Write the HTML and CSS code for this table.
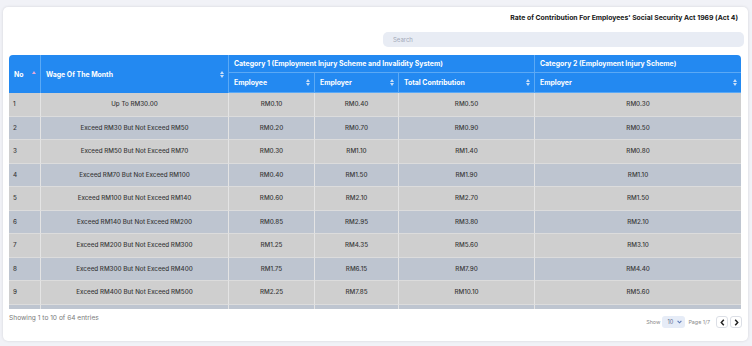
FILE: index.html
```html
<!DOCTYPE html>
<html lang="en">
<head>
    <meta charset="UTF-8">
    <meta name="viewport" content="width=device-width, initial-scale=1.0">
    <title>Rate of Contribution</title>
    <link rel="stylesheet" href="styles.css">
</head>
<body>

    <div class="card">
        <h1 class="title">Rate of Contribution For Employees' Social Security Act 1969 (Act 4)</h1>

        <div class="search-row">
            <input type="text" class="search" placeholder="Search">
        </div>

        <div class="table-wrap">
            <table class="rates">
                <colgroup>
                    <col style="width: 32px">
                    <col style="width: 188px">
                    <col style="width: 86px">
                    <col style="width: 84px">
                    <col style="width: 136px">
                    <col style="width: 206px">
                </colgroup>
                <thead>
                    <tr class="head-top">
                        <th rowspan="2" class="corner-left"><div class="th-inner">No <span class="sort asc"></span></div></th>
                        <th rowspan="2"><div class="th-inner">Wage Of The Month <span class="sort"></span></div></th>
                        <th colspan="3"><div class="th-inner">Category 1 (Employment Injury Scheme and Invalidity System)</div></th>
                        <th class="corner-right"><div class="th-inner">Category 2 (Employment Injury Scheme)</div></th>
                    </tr>
                    <tr class="head-sub">
                        <th><div class="th-inner">Employee <span class="sort"></span></div></th>
                        <th><div class="th-inner">Employer <span class="sort"></span></div></th>
                        <th><div class="th-inner">Total Contribution <span class="sort"></span></div></th>
                        <th><div class="th-inner">Employer <span class="sort"></span></div></th>
                    </tr>
                </thead>
                <tbody>
                    <tr><td class="no">1</td><td>Up To RM30.00</td><td>RM0.10</td><td>RM0.40</td><td>RM0.50</td><td>RM0.30</td></tr>
                    <tr><td class="no">2</td><td>Exceed RM30 But Not Exceed RM50</td><td>RM0.20</td><td>RM0.70</td><td>RM0.90</td><td>RM0.50</td></tr>
                    <tr><td class="no">3</td><td>Exceed RM50 But Not Exceed RM70</td><td>RM0.30</td><td>RM1.10</td><td>RM1.40</td><td>RM0.80</td></tr>
                    <tr><td class="no">4</td><td>Exceed RM70 But Not Exceed RM100</td><td>RM0.40</td><td>RM1.50</td><td>RM1.90</td><td>RM1.10</td></tr>
                    <tr><td class="no">5</td><td>Exceed RM100 But Not Exceed RM140</td><td>RM0.60</td><td>RM2.10</td><td>RM2.70</td><td>RM1.50</td></tr>
                    <tr><td class="no">6</td><td>Exceed RM140 But Not Exceed RM200</td><td>RM0.85</td><td>RM2.95</td><td>RM3.80</td><td>RM2.10</td></tr>
                    <tr><td class="no">7</td><td>Exceed RM200 But Not Exceed RM300</td><td>RM1.25</td><td>RM4.35</td><td>RM5.60</td><td>RM3.10</td></tr>
                    <tr><td class="no">8</td><td>Exceed RM300 But Not Exceed RM400</td><td>RM1.75</td><td>RM6.15</td><td>RM7.90</td><td>RM4.40</td></tr>
                    <tr><td class="no">9</td><td>Exceed RM400 But Not Exceed RM500</td><td>RM2.25</td><td>RM7.85</td><td>RM10.10</td><td>RM5.60</td></tr>
                    <tr><td class="no">10</td><td>Exceed RM500 But Not Exceed RM600</td><td>RM2.75</td><td>RM9.65</td><td>RM12.40</td><td>RM6.90</td></tr>
                </tbody>
            </table>
        </div>

        <div class="footer">
            <p class="entries">Showing 1 to 10 of 64 entries</p>
            <div class="pager">
                <span class="pager-label">Show</span>
                <div class="page-size">
                    <span>10</span>
                    <svg width="5" height="4" viewBox="0 0 5 4"><polyline points="0.6,0.8 2.5,2.8 4.4,0.8" fill="none" stroke="#5b79b8" stroke-width="1.1"/></svg>
                </div>
                <span class="pager-label">Page 1/7</span>
                <div class="pager-buttons">
                    <button class="page-btn"><svg width="5" height="7" viewBox="0 0 5 7"><polyline points="3.8,0.8 1.3,3.5 3.8,6.2" fill="none" stroke="#222" stroke-width="1.5"/></svg></button>
                    <button class="page-btn"><svg width="5" height="7" viewBox="0 0 5 7"><polyline points="1.2,0.8 3.7,3.5 1.2,6.2" fill="none" stroke="#222" stroke-width="1.5"/></svg></button>
                </div>
            </div>
        </div>
    </div>

</body>
</html>
```

FILE: styles.css
```css
* {
    margin: 0;
    padding: 0;
    box-sizing: border-box;
}

body {
    height: 346px;
    width: 752px;
    background-color: #f1f2f7;
    font-family: 'Inter', 'Open Sans', sans-serif;
    color: #333;
    overflow: hidden;
    padding: 7px 4px 5px 3px;
}

.card {
    height: 334px;
    background: #fff;
    border-radius: 5px;
    box-shadow: 0 0 3px rgba(0, 0, 0, 0.12);
    padding: 6px 4px 0 6px;
    display: flex;
    flex-direction: column;
}

.title {
    font-size: 6.85px;
    line-height: 9px;
    font-weight: 700;
    color: #161616;
    text-align: right;
    padding-right: 6px;
    margin-bottom: 10px;
}

.search-row {
    display: flex;
    justify-content: flex-end;
    margin-bottom: 8px;
}

.search {
    width: 361px;
    height: 15px;
    border: none;
    outline: none;
    border-radius: 5px;
    background: #e8ecf4;
    padding: 0 10px;
    font-family: inherit;
    font-size: 6px;
    color: #333;
}

.search::placeholder {
    color: #a3a9b8;
}

/* Table */
.table-wrap {
    height: 254px;
    width: 735px;
    overflow-y: scroll;
    overflow-x: hidden;
}

.table-wrap::-webkit-scrollbar {
    width: 3px;
}

.table-wrap::-webkit-scrollbar-track {
    background: #e2e4e8;
}

.table-wrap::-webkit-scrollbar-thumb {
    background: #3d9ee0;
    border-radius: 2px;
}

.rates {
    width: 732px;
    table-layout: fixed;
    border-collapse: separate;
    border-spacing: 0;
}

.rates thead th {
    position: sticky;
    background: #2389f1;
    color: #fff;
    font-size: 6.9px;
    font-weight: 700;
    text-align: left;
    padding: 0 4px 0 5px;
    border-right: 1px solid #5ba9f5;
    border-bottom: 1px solid #5ba9f5;
    white-space: nowrap;
}

.head-top th {
    top: 0;
    height: 18px;
}

.head-sub th {
    top: 18px;
    height: 20px;
    border-bottom: none;
}

.rates thead th[rowspan] {
    border-bottom: none;
}

.rates thead th:last-child {
    border-right: none;
}

.corner-left {
    border-top-left-radius: 4px;
}

.corner-right {
    border-top-right-radius: 4px;
}

.th-inner {
    display: flex;
    align-items: center;
    justify-content: space-between;
}

.sort {
    width: 4px;
    height: 7px;
    position: relative;
    flex-shrink: 0;
}

.sort::before,
.sort::after {
    content: '';
    position: absolute;
    left: 0;
    border-left: 2px solid transparent;
    border-right: 2px solid transparent;
}

.sort::before {
    top: 0;
    border-bottom: 3px solid #c8def8;
}

.sort::after {
    bottom: 0;
    border-top: 3px solid #c8def8;
}

.sort.asc::before {
    border-bottom-color: #e7a9d8;
}

.sort.asc::after {
    display: none;
}

.rates tbody td {
    height: 23.5px;
    font-size: 6.25px;
    font-weight: 500;
    color: #3a3a3a;
    text-align: center;
    background: #cfcfcf;
    border-right: 1px solid #e4e4e4;
    border-bottom: 1px solid #dcdcdc;
    white-space: nowrap;
}

.rates tbody tr:nth-child(even) td {
    background: #bec5d0;
}

.rates tbody td:last-child {
    border-right: none;
}

.rates tbody td.no {
    text-align: left;
    padding-left: 4px;
}

/* Footer */
.footer {
    display: flex;
    justify-content: space-between;
    align-items: flex-start;
    padding-right: 2px;
}

.entries {
    font-size: 6.6px;
    line-height: 10px;
    color: #7a7a7a;
    margin-top: 4px;
}

.pager {
    display: flex;
    align-items: center;
    margin-top: 7px;
}

.pager-label {
    font-size: 5.4px;
    color: #8a8a8a;
}

.page-size {
    width: 23px;
    height: 12px;
    margin: 0 3px 0 2px;
    background: #e6ecf7;
    border-radius: 3px;
    display: flex;
    align-items: center;
    justify-content: space-between;
    padding: 0 3px 0 5px;
    font-size: 5.6px;
    color: #5b6b8c;
}

.pager-buttons {
    display: flex;
    gap: 2px;
    margin-left: 6px;
}

.page-btn {
    width: 12px;
    height: 12px;
    background: #fff;
    border: 1px solid #dcdfe6;
    border-radius: 3px;
    display: flex;
    align-items: center;
    justify-content: center;
}
```
